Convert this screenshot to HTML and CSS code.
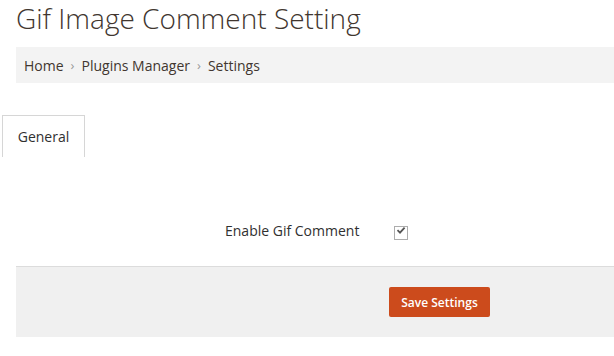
FILE: index.html
```html
<!DOCTYPE html>
<html lang="en">
<head>
    <meta charset="UTF-8">
    <title>Gif Image Comment Setting</title>
    <link rel="stylesheet" href="styles.css">
</head>
<body>
    <h1 class="page-title">Gif Image Comment Setting</h1>

    <!-- Breadcrumbs -->
    <ul class="breadcrumbs">
        <li>Home</li>
        <li class="sep">&rsaquo;</li>
        <li>Plugins Manager</li>
        <li class="sep">&rsaquo;</li>
        <li>Settings</li>
    </ul>

    <!-- Tabs -->
    <div class="tabs">
        <button class="active">General</button>
    </div>

    <form class="settings-form">
        <div class="field">
            <label for="enableGif">Enable Gif Comment</label>
            <span class="check">
                <input type="checkbox" id="enableGif" checked>
                <svg viewBox="0 0 14 14" width="14" height="14"><path d="M3.5 7.2l2.5 2.4 4.6-5" fill="none" stroke="#555" stroke-width="1.8"/></svg>
            </span>
        </div>
        <div class="form-actions">
            <button type="button" class="save">Save Settings</button>
        </div>
    </form>
</body>
</html>
```

FILE: styles.css
```css
body {
    margin: 0;
    font-family: 'Open Sans', sans-serif;
    color: #303030;
}

.page-title {
    margin: 0;
    padding: 0 0 0 16px;
    font-size: 28px;
    font-weight: 300;
    line-height: 36px;
    color: #41362f;
}

.breadcrumbs {
    list-style: none;
    margin: 11px 0 0 16px;
    padding: 0 8px;
    height: 36px;
    display: flex;
    align-items: center;
    background-color: #f3f3f3;
    font-size: 14px;
    color: #41362f;
}

.breadcrumbs .sep {
    color: #999;
    font-size: 13px;
    padding: 0 7px;
}

.tabs {
    margin-top: 32px;
    padding-left: 2px;
    display: flex;
}

.tabs button {
    font-family: 'Open Sans', sans-serif;
    font-size: 14px;
    color: #303030;
    background: #fff;
    border: 1px solid #d6d6d6;
    border-bottom: none;
    width: 83px;
    height: 42px;
    padding: 0;
}

.settings-form {
    margin-top: 64px;
}

.field {
    display: flex;
    align-items: center;
    height: 18px;
}

.field label {
    margin-left: 225px;
    width: 169px;
    font-size: 14px;
    color: #303030;
}

.check {
    position: relative;
    width: 14px;
    height: 14px;
}

.check input {
    margin: 0;
    width: 14px;
    height: 14px;
    appearance: none;
    border: 1px solid #adadad;
    background: #fff;
    box-sizing: border-box;
}

.check svg {
    position: absolute;
    left: 0;
    top: 0;
    pointer-events: none;
}

.form-actions {
    margin: 27px 0 0 16px;
    border-top: 1px solid #dcdcdc;
    background-color: #f0f0f0;
    height: 70px;
    padding-left: 373px;
    display: flex;
    align-items: center;
}

.save {
    font-family: 'Open Sans', sans-serif;
    font-size: 12px;
    font-weight: 600;
    color: #fff;
    background-color: #cc4b1c;
    border: none;
    border-radius: 2px;
    width: 101px;
    height: 30px;
    padding: 0;
}
```
